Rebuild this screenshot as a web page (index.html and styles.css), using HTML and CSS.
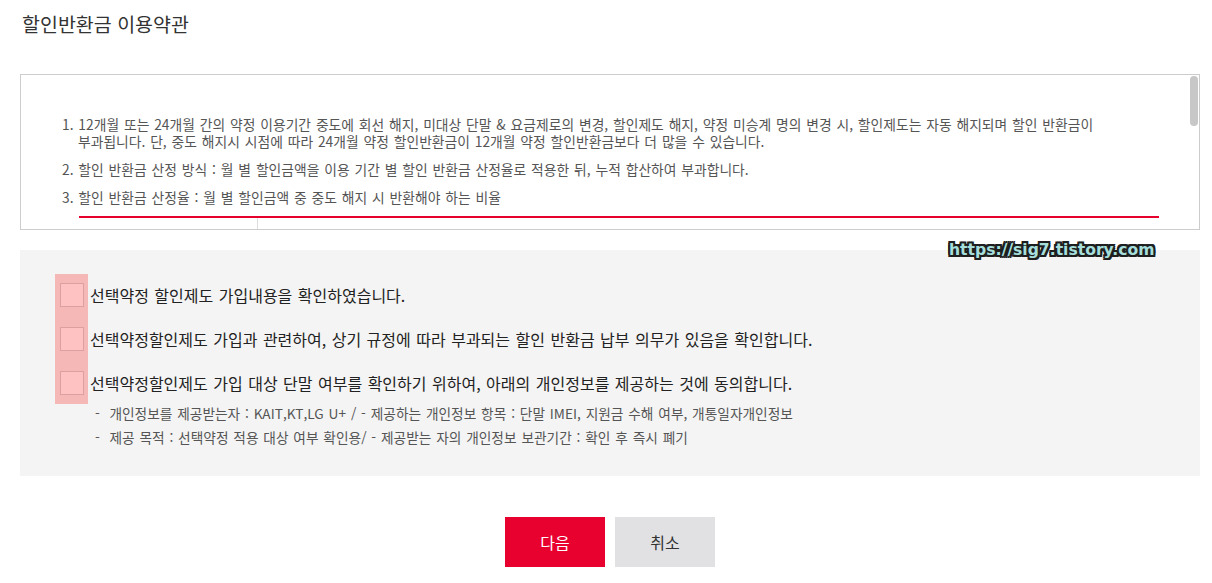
FILE: index.html
```html
<!DOCTYPE html>
<html lang="ko">
<head>
<meta charset="utf-8">
<title>할인반환금 이용약관</title>
<link rel="stylesheet" href="styles.css">
</head>
<body>
<div class="page">
  <h1 class="title">할인반환금 이용약관</h1>

  <div class="terms-wrap">
    <div class="terms">
      <ol class="terms-list">
        <li>1. 12개월 또는 24개월 간의 약정 이용기간 중도에 회선 해지, 미대상 단말 &amp; 요금제로의 변경, 할인제도 해지, 약정 미승계 명의 변경 시, 할인제도는 자동 해지되며 할인 반환금이<br>부과됩니다. 단, 중도 해지시 시점에 따라 24개월 약정 할인반환금이 12개월 약정 할인반환금보다 더 많을 수 있습니다.</li>
        <li>2. 할인 반환금 산정 방식 : 월 별 할인금액을 이용 기간 별 할인 반환금 산정율로 적용한 뒤, 누적 합산하여 부과합니다.</li>
        <li>3. 할인 반환금 산정율 : 월 별 할인금액 중 중도 해지 시 반환해야 하는 비율</li>
      </ol>
      <div class="rate-table">
        <div class="rate-col rate-head"></div>
        <div class="rate-col"></div>
      </div>
    </div>
    <div class="scroll-thumb"></div>
  </div>

  <div class="agree">
    <div class="checks">
      <label class="check-row"><span class="box"></span><span class="check-text">선택약정 할인제도 가입내용을 확인하였습니다.</span></label>
      <label class="check-row"><span class="box"></span><span class="check-text">선택약정할인제도 가입과 관련하여, 상기 규정에 따라 부과되는 할인 반환금 납부 의무가 있음을 확인합니다.</span></label>
      <label class="check-row"><span class="box"></span><span class="check-text">선택약정할인제도 가입 대상 단말 여부를 확인하기 위하여, 아래의 개인정보를 제공하는 것에 동의합니다.</span></label>
    </div>
    <ul class="notes">
      <li>-&nbsp; 개인정보를 제공받는자 : KAIT,KT,LG U+ / - 제공하는 개인정보 항목 : 단말 IMEI, 지원금 수해 여부, 개통일자개인정보</li>
      <li>-&nbsp; 제공 목적 : 선택약정 적용 대상 여부 확인용/ - 제공받는 자의 개인정보 보관기간 : 확인 후 즉시 폐기</li>
    </ul>
    <div class="watermark">https://sig7.tistory.com</div>
  </div>

  <div class="actions">
    <button class="btn btn-primary" type="button">다음</button>
    <button class="btn btn-cancel" type="button">취소</button>
  </div>
</div>
</body>
</html>
```

FILE: styles.css
```css
* { box-sizing: border-box; }

html, body {
  margin: 0;
  padding: 0;
  background: #fff;
}

body {
  font-family: "Noto Sans CJK KR", "Noto Sans", sans-serif;
  color: #222;
}

.page {
  padding: 12px 12px 0 20px;
}

.title {
  margin: 0 0 38px 2px;
  font-size: 19.5px;
  line-height: 24px;
  font-weight: 400;
  color: #333;
}

.terms-wrap {
  position: relative;
}

.terms {
  height: 156px;
  border: 1px solid #cccccc;
  overflow-y: auto;
  scrollbar-width: none;
  padding: 41px 0 30px 41px;
}

.terms::-webkit-scrollbar {
  display: none;
}

.scroll-thumb {
  position: absolute;
  top: 2px;
  right: 2px;
  width: 8px;
  height: 50px;
  border-radius: 4px;
  background: #c7c7c7;
}

.terms-list {
  list-style: none;
  margin: 0;
  padding: 0;
  font-size: 13.8px;
  line-height: 17px;
  color: #555;
  word-spacing: 1px;
}

.terms-list li {
  padding-left: 16px;
  text-indent: -16px;
  margin-bottom: 11px;
}

.terms-list li:last-child {
  margin-bottom: 10px;
}

.rate-table {
  margin-left: 17px;
  width: 1080px;
  height: 300px;
  border-top: 2px solid #e6002d;
  display: grid;
  grid-template-columns: 179px 1fr;
}

.rate-head {
  border-right: 1px solid #dddddd;
}

.agree {
  position: relative;
  margin-top: 20px;
  background: #f4f4f4;
  padding: 33px 40px 27px;
}

.checks {
  position: relative;
  display: flex;
  flex-direction: column;
  gap: 20px;
}

.checks::before {
  content: "";
  position: absolute;
  left: -5px;
  top: -9px;
  width: 33px;
  height: 130px;
  background: #f6b7b7;
}

.check-row {
  position: relative;
  display: flex;
  align-items: center;
  gap: 6px;
  height: 24px;
}

.box {
  flex: none;
  width: 24px;
  height: 24px;
  background: #ffc2c2;
  border: 1px solid #dca0a0;
}

.check-text {
  font-size: 16px;
  line-height: 24px;
  color: #222;
  word-spacing: 1px;
}

.notes {
  list-style: none;
  margin: 6px 0 0;
  padding: 0 0 0 35px;
  font-size: 13.7px;
  line-height: 24px;
  color: #555;
  word-spacing: 1px;
}

.watermark {
  position: absolute;
  top: -10px;
  left: 929px;
  font-family: "DejaVu Sans", sans-serif;
  font-weight: 700;
  font-size: 15.6px;
  line-height: 20px;
  color: #a6dedb;
  text-shadow:
    2px 0 0 #1e1e1e, -2px 0 0 #1e1e1e, 0 2px 0 #1e1e1e, 0 -2px 0 #1e1e1e,
    2px 2px 0 #1e1e1e, -2px -2px 0 #1e1e1e, 2px -2px 0 #1e1e1e, -2px 2px 0 #1e1e1e,
    1px 1px 1px #1e1e1e, -1px -1px 1px #1e1e1e;
}

.actions {
  display: flex;
  justify-content: center;
  gap: 10px;
  margin-top: 41px;
}

.btn {
  width: 100px;
  height: 50px;
  border: 0;
  padding: 0;
  font-family: "Noto Sans CJK KR", "Noto Sans", sans-serif;
  font-size: 16px;
  cursor: pointer;
}

.btn-primary {
  background: #e8002f;
  color: #fff;
}

.btn-cancel {
  background: #e1e1e3;
  color: #333;
}
```
